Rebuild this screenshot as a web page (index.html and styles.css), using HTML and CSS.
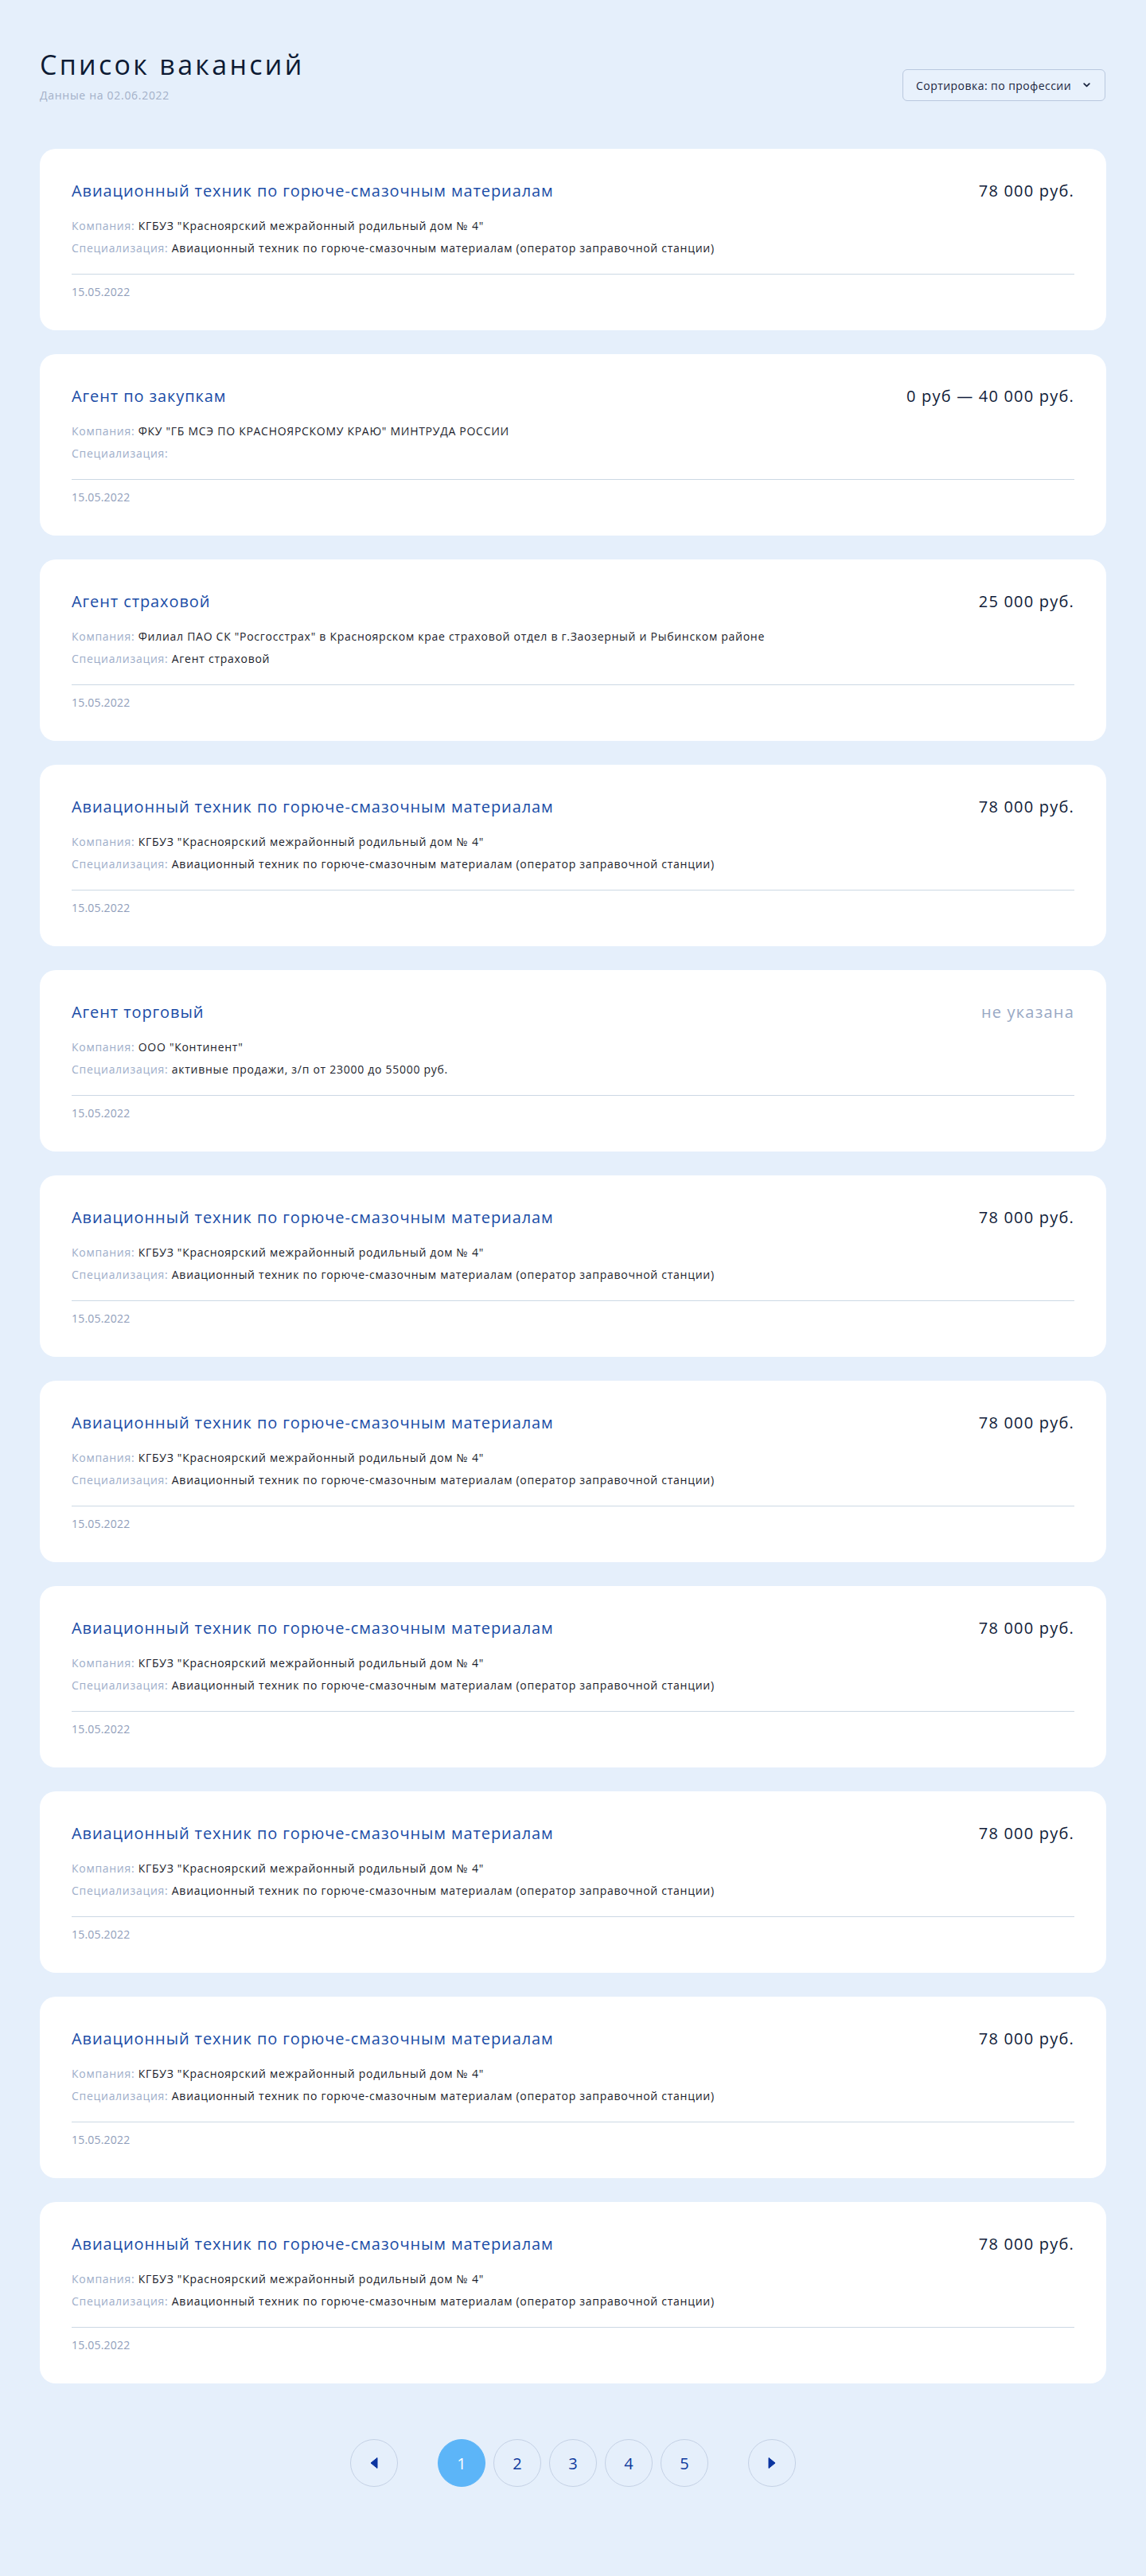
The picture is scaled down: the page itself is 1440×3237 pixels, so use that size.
FILE: index.html
```html
<!DOCTYPE html>
<html lang="ru">
<head>
<meta charset="utf-8">
<title>Список вакансий</title>
<link rel="stylesheet" href="styles.css">
</head>
<body>
<div class="page">
  <header class="header">
    <div class="header__titles">
      <h1 class="header__title">Список вакансий</h1>
      <div class="header__sub">Данные на 02.06.2022</div>
    </div>
    <button class="sort">
      <span>Сортировка: по профессии</span>
      <svg class="sort__chev" width="9" height="6" viewBox="0 0 9 6"><path d="M1.2 1.2 L4.5 4.4 L7.8 1.2" fill="none" stroke="#1a2540" stroke-width="1.8" stroke-linecap="round" stroke-linejoin="round"/></svg>
    </button>
  </header>

  <main class="list">
    <article class="card">
      <div class="card__head"><a class="card__title">Авиационный техник по горюче-смазочным материалам</a><span class="card__price">78 000 руб.</span></div>
      <div class="card__meta"><span class="label">Компания:</span> КГБУЗ "Красноярский межрайонный родильный дом № 4"</div>
      <div class="card__meta card__meta--second"><span class="label">Специализация:</span> Авиационный техник по горюче-смазочным материалам (оператор заправочной станции)</div>
      <div class="card__date">15.05.2022</div>
    </article>

    <article class="card">
      <div class="card__head"><a class="card__title">Агент по закупкам</a><span class="card__price">0 руб — 40 000 руб.</span></div>
      <div class="card__meta"><span class="label">Компания:</span> ФКУ "ГБ МСЭ ПО КРАСНОЯРСКОМУ КРАЮ" МИНТРУДА РОССИИ</div>
      <div class="card__meta card__meta--second"><span class="label">Специализация:</span></div>
      <div class="card__date">15.05.2022</div>
    </article>

    <article class="card">
      <div class="card__head"><a class="card__title">Агент страховой</a><span class="card__price">25 000 руб.</span></div>
      <div class="card__meta"><span class="label">Компания:</span> Филиал ПАО СК "Росгосстрах" в Красноярском крае страховой отдел в г.Заозерный и Рыбинском районе</div>
      <div class="card__meta card__meta--second"><span class="label">Специализация:</span> Агент страховой</div>
      <div class="card__date">15.05.2022</div>
    </article>

    <article class="card">
      <div class="card__head"><a class="card__title">Авиационный техник по горюче-смазочным материалам</a><span class="card__price">78 000 руб.</span></div>
      <div class="card__meta"><span class="label">Компания:</span> КГБУЗ "Красноярский межрайонный родильный дом № 4"</div>
      <div class="card__meta card__meta--second"><span class="label">Специализация:</span> Авиационный техник по горюче-смазочным материалам (оператор заправочной станции)</div>
      <div class="card__date">15.05.2022</div>
    </article>

    <article class="card">
      <div class="card__head"><a class="card__title">Агент торговый</a><span class="card__price card__price--none">не указана</span></div>
      <div class="card__meta"><span class="label">Компания:</span> ООО "Континент"</div>
      <div class="card__meta card__meta--second"><span class="label">Специализация:</span> активные продажи, з/п от 23000 до 55000 руб.</div>
      <div class="card__date">15.05.2022</div>
    </article>

    <article class="card">
      <div class="card__head"><a class="card__title">Авиационный техник по горюче-смазочным материалам</a><span class="card__price">78 000 руб.</span></div>
      <div class="card__meta"><span class="label">Компания:</span> КГБУЗ "Красноярский межрайонный родильный дом № 4"</div>
      <div class="card__meta card__meta--second"><span class="label">Специализация:</span> Авиационный техник по горюче-смазочным материалам (оператор заправочной станции)</div>
      <div class="card__date">15.05.2022</div>
    </article>

    <article class="card">
      <div class="card__head"><a class="card__title">Авиационный техник по горюче-смазочным материалам</a><span class="card__price">78 000 руб.</span></div>
      <div class="card__meta"><span class="label">Компания:</span> КГБУЗ "Красноярский межрайонный родильный дом № 4"</div>
      <div class="card__meta card__meta--second"><span class="label">Специализация:</span> Авиационный техник по горюче-смазочным материалам (оператор заправочной станции)</div>
      <div class="card__date">15.05.2022</div>
    </article>

    <article class="card">
      <div class="card__head"><a class="card__title">Авиационный техник по горюче-смазочным материалам</a><span class="card__price">78 000 руб.</span></div>
      <div class="card__meta"><span class="label">Компания:</span> КГБУЗ "Красноярский межрайонный родильный дом № 4"</div>
      <div class="card__meta card__meta--second"><span class="label">Специализация:</span> Авиационный техник по горюче-смазочным материалам (оператор заправочной станции)</div>
      <div class="card__date">15.05.2022</div>
    </article>

    <article class="card">
      <div class="card__head"><a class="card__title">Авиационный техник по горюче-смазочным материалам</a><span class="card__price">78 000 руб.</span></div>
      <div class="card__meta"><span class="label">Компания:</span> КГБУЗ "Красноярский межрайонный родильный дом № 4"</div>
      <div class="card__meta card__meta--second"><span class="label">Специализация:</span> Авиационный техник по горюче-смазочным материалам (оператор заправочной станции)</div>
      <div class="card__date">15.05.2022</div>
    </article>

    <article class="card">
      <div class="card__head"><a class="card__title">Авиационный техник по горюче-смазочным материалам</a><span class="card__price">78 000 руб.</span></div>
      <div class="card__meta"><span class="label">Компания:</span> КГБУЗ "Красноярский межрайонный родильный дом № 4"</div>
      <div class="card__meta card__meta--second"><span class="label">Специализация:</span> Авиационный техник по горюче-смазочным материалам (оператор заправочной станции)</div>
      <div class="card__date">15.05.2022</div>
    </article>

    <article class="card">
      <div class="card__head"><a class="card__title">Авиационный техник по горюче-смазочным материалам</a><span class="card__price">78 000 руб.</span></div>
      <div class="card__meta"><span class="label">Компания:</span> КГБУЗ "Красноярский межрайонный родильный дом № 4"</div>
      <div class="card__meta card__meta--second"><span class="label">Специализация:</span> Авиационный техник по горюче-смазочным материалам (оператор заправочной станции)</div>
      <div class="card__date">15.05.2022</div>
    </article>
  </main>

  <nav class="pager">
    <button class="pager__btn pager__arrow" aria-label="Назад">
      <svg width="12" height="16" viewBox="0 0 12 16"><path d="M10 1.5 L2 8 L10 14.5 Z" fill="#0b35a0" stroke="#0b35a0" stroke-width="1" stroke-linejoin="round"/></svg>
    </button>
    <div class="pager__pages">
      <button class="pager__btn pager__btn--active">1</button>
      <button class="pager__btn">2</button>
      <button class="pager__btn">3</button>
      <button class="pager__btn">4</button>
      <button class="pager__btn">5</button>
    </div>
    <button class="pager__btn pager__arrow" aria-label="Вперёд">
      <svg width="12" height="16" viewBox="0 0 12 16"><path d="M2 1.5 L10 8 L2 14.5 Z" fill="#0b35a0" stroke="#0b35a0" stroke-width="1" stroke-linejoin="round"/></svg>
    </button>
  </nav>
</div>
</body>
</html>
```

FILE: styles.css
```css
* { box-sizing: border-box; }

html, body {
  margin: 0;
  padding: 0;
}

body {
  background: #e5effb;
  font-family: "Open Sans", "Noto Sans", "Liberation Sans", sans-serif;
  color: #131c36;
}

.page {
  padding: 61px 50px 112px;
}

.header {
  display: flex;
  justify-content: space-between;
  align-items: flex-end;
}

.header__title {
  margin: 0;
  font-size: 34px;
  line-height: 40px;
  font-weight: 400;
  color: #0d1a33;
  letter-spacing: 3.3px;
}

.header__sub {
  margin-top: 10px;
  font-size: 14px;
  line-height: 18px;
  color: #a3b0c8;
  letter-spacing: 0.7px;
}

.sort {
  display: flex;
  align-items: center;
  gap: 15px;
  height: 40px;
  margin-bottom: 2px;
  margin-right: 1px;
  padding: 0 18px 0 16px;
  background: #e8f1fc;
  border: 1px solid #b9c8de;
  border-radius: 6px;
  font-family: inherit;
  font-size: 14px;
  font-weight: 500;
  letter-spacing: 0.45px;
  color: #1a2540;
}

.sort__chev { display: block; }

.list {
  margin-top: 58px;
  display: flex;
  flex-direction: column;
  gap: 30px;
}

.card {
  background: #ffffff;
  border-radius: 20px;
  padding: 41px 40px 38px;
  height: 228px;
}

.card__head {
  display: flex;
  justify-content: space-between;
  align-items: baseline;
  height: 24px;
  margin-bottom: 22px;
}

.card__title {
  font-size: 20px;
  line-height: 24px;
  color: #1a4ca6;
  letter-spacing: 0.9px;
}

.card__price {
  font-size: 20px;
  line-height: 24px;
  font-weight: 500;
  color: #0f1b38;
  letter-spacing: 1.2px;
}

.card__price--none {
  font-weight: 400;
  color: #98a8c4;
}

.card__meta {
  font-size: 14px;
  line-height: 20px;
  height: 20px;
  color: #1b1d2b;
  white-space: nowrap;
  letter-spacing: 0.72px;
}

.card__meta--second {
  margin-top: 8px;
  padding-bottom: 22px;
  height: 43px;
  border-bottom: 1px solid #ccd8e4;
}

.label {
  color: #9dadc9;
}

.card__date {
  margin-top: 12px;
  font-size: 14px;
  line-height: 20px;
  color: #8f9dba;
  letter-spacing: 0.2px;
}

.pager {
  margin-top: 70px;
  display: flex;
  justify-content: center;
  align-items: center;
  gap: 50px;
}

.pager__pages {
  display: flex;
  gap: 10px;
}

.pager__btn {
  width: 60px;
  height: 60px;
  border-radius: 50%;
  border: 1px solid #c4d1e5;
  background: transparent;
  display: flex;
  align-items: center;
  justify-content: center;
  padding: 0;
  font-family: inherit;
  font-size: 20px;
  font-weight: 500;
  color: #0d3a9d;
}

.pager__btn--active {
  background: #5cb5f8;
  border-color: #5cb5f8;
  color: #ffffff;
  font-weight: 400;
}

.pager__arrow svg { display: block; }
```
